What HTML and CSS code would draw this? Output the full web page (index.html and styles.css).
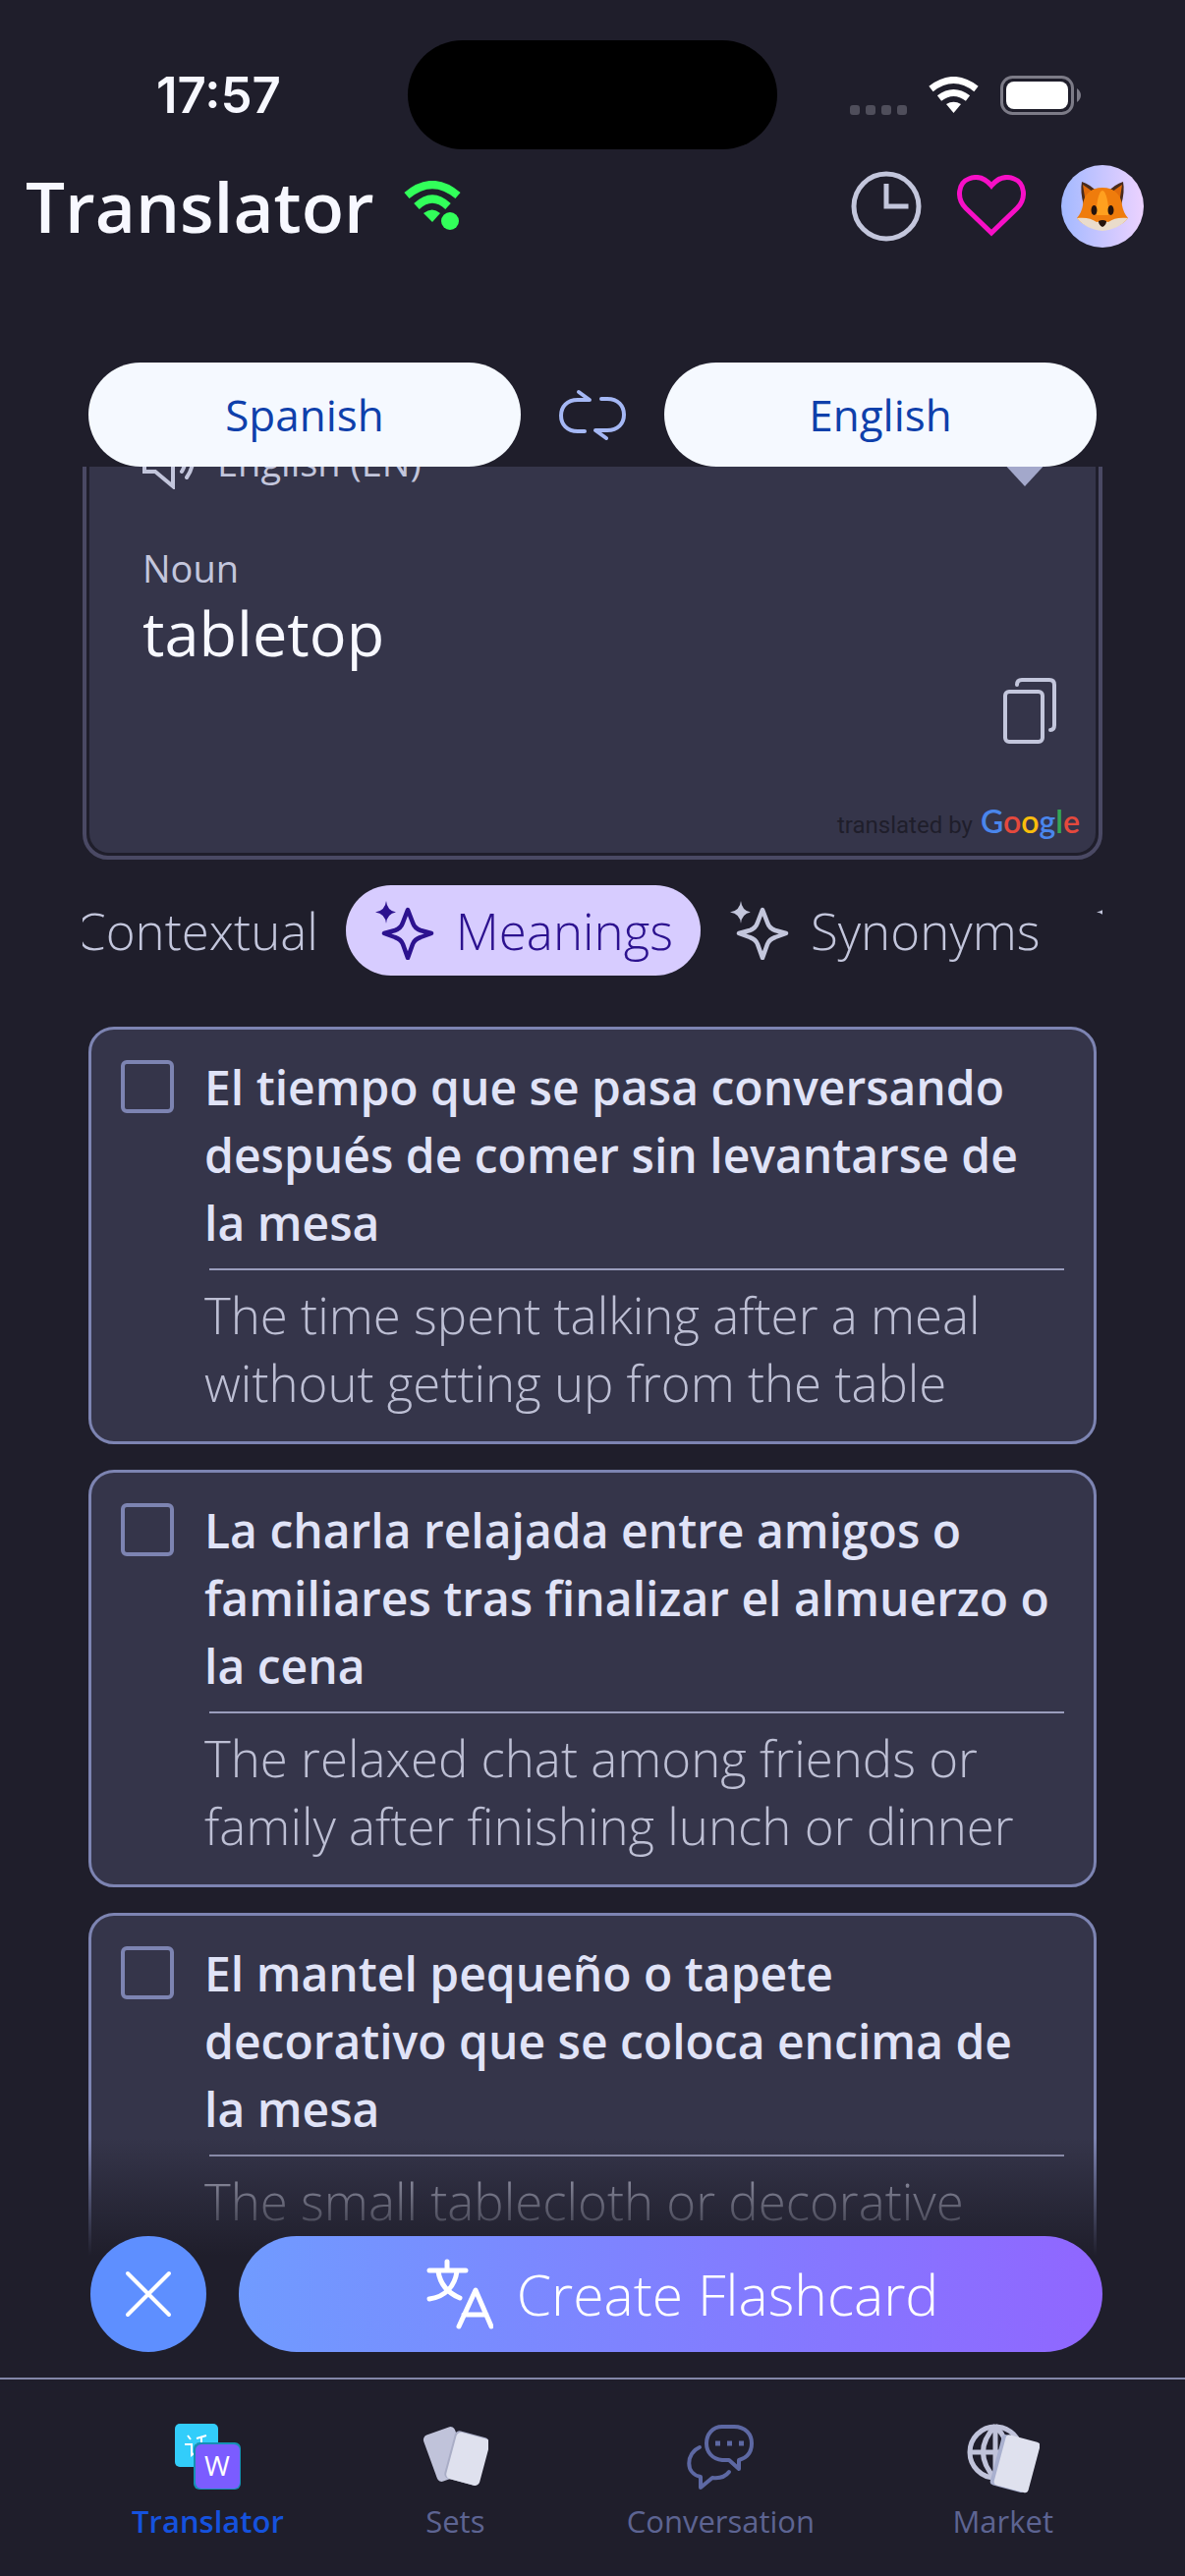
FILE: index.html
```html
<!DOCTYPE html>
<html lang="en">
<head>
  <meta charset="UTF-8" />
  <meta name="viewport" content="width=device-width, initial-scale=1.0"/>
  <title>Translator</title>
  <link rel="stylesheet" href="styles.css">
</head>
<body>

  <!-- Shared icons -->
  <svg class="sprite" aria-hidden="true">
    <symbol id="sparkle" viewBox="0 0 60 60">
      <path d="M11 0Q12 10 21 11.500Q12 13 11 23Q10 13 0 11.500Q10 10 11 0Z" fill="currentColor"/>
      <path d="M33 9L38 22Q40 28 46 30L57 33L46 37Q40 39 38 44L33 58L28 44Q26 39 20 37L9 33L20 30Q26 28 28 22Z" fill="none" stroke="currentColor" stroke-width="4.500" stroke-linejoin="round"/>
    </symbol>
  </svg>

  <div class="app">
    <div class="status">
      <span class="time">17:57</span>
      <div class="island"></div>
      <div class="signals">
        <div class="cell"><i></i><i></i><i></i><i></i></div>
        <svg width="51" height="38" viewBox="0 0 51 38" fill="none" stroke="#fff" stroke-width="7">
          <path d="M2.500 12.500Q25.500 -5.500 48.500 12.500"/>
          <path d="M11 22Q25.500 11 40 22"/>
          <path d="M18 28Q25.500 23.500 33 28L25.500 37Z" fill="#fff" stroke="none"/>
        </svg>
        <svg width="83" height="40" viewBox="0 0 83 40">
          <rect x="1.500" y="1.500" width="72" height="37" rx="11" fill="none" stroke="#7c7b87" stroke-width="3"/>
          <rect x="6" y="6" width="63" height="28" rx="8" fill="#fff"/>
          <path d="M78 13Q82 16 82 20Q82 24 78 27Z" fill="#7c7b87"/>
        </svg>
      </div>
    </div>

    <header class="topbar">
      <h1>Translator</h1>
      <svg class="online" width="58" height="52" viewBox="0 0 58 52" fill="none" stroke="#32ff5a" stroke-width="8">
        <path d="M3 15Q29 -7 55 15"/>
        <path d="M13 26Q29 11 45 26"/>
        <path d="M20 33Q29 26 37 33L29 42Z" fill="#32ff5a" stroke="none"/>
        <circle cx="47" cy="41" r="9" fill="#32ff5a" stroke="none"/>
      </svg>
      <div class="tools">
        <button class="icon-btn" aria-label="History">
          <svg width="72" height="72" viewBox="0 0 72 72" fill="none" stroke="#c3c6dc" stroke-width="5">
            <circle cx="36" cy="36" r="33"/>
            <path d="M36 13V36H58.500"/>
          </svg>
        </button>
        <button class="icon-btn" aria-label="Favorites">
          <svg width="70" height="64" viewBox="0 0 70 64" fill="none" stroke="#f70fc6" stroke-width="5">
            <path d="M35 59L9 34C-1 24 1 8 12 4C22 0 30 5 35 11C40 5 48 0 58 4C69 8 71 24 61 34Z"/>
          </svg>
        </button>
        <button class="avatar" aria-label="Profile">
          <svg width="52" height="50" viewBox="0 0 52 50">
            <path d="M5 0Q14 3 20 10L7 24Q3 10 5 0ZM47 0Q38 3 32 10L45 24Q49 10 47 0Z" fill="#4a2b1c"/>
            <path d="M6 3Q13 7 18 13L9 22ZM46 3Q39 7 34 13L43 22Z" fill="#e06a0a"/>
            <path d="M26 6C38 6 45 13 46 24Q47 31 52 37C47 44 36 48 26 49C16 48 5 44 0 37Q5 31 6 24C7 13 14 6 26 6Z" fill="#ef7c0c"/>
            <path d="M26 9C30 9 33 26 32 34H20C19 26 22 9 26 9Z" fill="#ffa01f"/>
            <path d="M0 37C8 36 15 37 20 41L26 40L32 41C37 37 44 36 52 37C46 45 36 49 26 50C16 49 6 45 0 37Z" fill="#eadccb"/>
            <ellipse cx="17.500" cy="29" rx="3" ry="5" fill="#24130d"/>
            <ellipse cx="34.500" cy="29" rx="3" ry="5" fill="#24130d"/>
            <path d="M22 40Q26 38 30 40Q30 44 26 46Q22 44 22 40Z" fill="#24130d"/>
          </svg>
        </button>
      </div>
    </header>

    <div class="languages">
      <button class="lang">Spanish</button>
      <button class="icon-btn" aria-label="Swap languages">
        <svg width="70" height="52" viewBox="0 0 70 52" fill="none" stroke="#a5b8f5" stroke-width="4" stroke-linecap="round" stroke-linejoin="round">
          <path d="M27 43H20C9 43 3 36 3 27C3 18 9 11 20 11H32L21 3"/>
          <path d="M44 10H50C61 10 67 17 67 26C67 35 61 42 50 42H38L49 50"/>
        </svg>
      </button>
      <button class="lang">English</button>
    </div>

    <main>
      <div class="scroll">
        <section class="result">
          <div class="result-body">
            <div class="result-head">
              <svg width="56" height="56" viewBox="0 0 56 56" fill="none" stroke="#c3c6dc" stroke-width="4">
                <path d="M2 17V38H13L31 53V3L13 17Z"/>
                <path d="M41 20Q46 28 40 38M47 14Q56 28 45 44" stroke-linecap="round"/>
              </svg>
              <span>English (EN)</span>
              <svg class="caret" width="48" height="26" viewBox="0 0 48 26"><path d="M0 0H48L24 26Z" fill="#a3a8cb"/></svg>
            </div>
            <p class="kind">Noun</p>
            <p class="word">tabletop</p>
            <button class="icon-btn copy" aria-label="Copy">
              <svg width="54" height="68" viewBox="0 0 54 68" fill="none" stroke="#c3c6dc" stroke-width="4" stroke-linecap="round">
                <rect x="2" y="14" width="38" height="51" rx="4"/>
                <path d="M14 7Q14 2 19 2H47Q52 2 52 7V48Q52 53 48 53"/>
              </svg>
            </button>
            <div class="credit">translated by
              <span class="google"><span class="blue">G</span><span class="red">o</span><span class="yellow">o</span><span class="blue">g</span><span class="green">l</span><span class="red">e</span></span>
            </div>
          </div>
        </section>

        <div class="chips">
          <button class="chip first"><svg><use href="#sparkle"/></svg>Contextual</button>
          <button class="chip active"><svg><use href="#sparkle"/></svg>Meanings</button>
          <button class="chip"><svg><use href="#sparkle"/></svg>Synonyms</button>
          <button class="chip" aria-label="More"><svg><use href="#sparkle"/></svg></button>
        </div>

        <div class="card">
          <input type="checkbox" id="m1">
          <label for="m1">
            <strong>El tiempo que se pasa conversando después de comer sin levantarse de la mesa</strong>
            <span>The time spent talking after a meal without getting up from the table</span>
          </label>
        </div>
        <div class="card">
          <input type="checkbox" id="m2">
          <label for="m2">
            <strong>La charla relajada entre amigos o familiares tras finalizar el almuerzo o la cena</strong>
            <span>The relaxed chat among friends or family after finishing lunch or dinner</span>
          </label>
        </div>
        <div class="card">
          <input type="checkbox" id="m3">
          <label for="m3">
            <strong>El mantel pequeño o tapete decorativo que se coloca encima de la mesa</strong>
            <span>The small tablecloth or decorative</span>
          </label>
        </div>
      </div>

      <!-- Floating actions over the list -->
      <div class="actions">
        <button class="close" aria-label="Close">
          <svg width="48" height="48" viewBox="0 0 48 48" stroke="#fff" stroke-width="4" stroke-linecap="round"><path d="M3 3L45 45M45 3L3 45"/></svg>
        </button>
        <button class="create">
          <svg width="68" height="72" viewBox="0 0 68 72" fill="none" stroke="#fff" stroke-width="5" stroke-linecap="round" stroke-linejoin="round">
            <path d="M3 12H40M21 3V12M12 13C14 26 22 35 34 40M31 13C29 28 19 39 3 41"/>
            <path d="M33 69L50 32L66 69M38 57H61"/>
          </svg>
          Create Flashcard
        </button>
      </div>
    </main>

    <nav>
      <a href="#" class="current">
        <svg width="68" height="68" viewBox="0 0 68 68">
          <rect x="1" y="1" width="44" height="44" rx="5" fill="#32cdfa"/>
          <path d="M14 13L17 17M11 22H18V33L22 30M23 16L33 13M22 22H35M28 15V28" fill="none" stroke="#fff" stroke-width="2"/>
          <rect x="20" y="20" width="48" height="48" rx="6" fill="#1590b5"/>
          <rect x="22" y="22" width="45" height="45" rx="6" fill="#7b5cff"/>
          <text x="44" y="54" text-anchor="middle" fill="#fff">W</text>
        </svg>
        Translator
      </a>
      <a href="#">
        <svg width="68" height="68" viewBox="0 0 68 68">
          <rect x="8" y="7" width="34" height="50" rx="5" fill="#c0c3da" transform="rotate(-20 25 32)"/>
          <rect x="28" y="11" width="36" height="50" rx="5" fill="#a9adc6" transform="rotate(15 46 36)"/>
          <rect x="30" y="12" width="35" height="49" rx="5" fill="#dfe1ee" transform="rotate(15 46 36)"/>
        </svg>
        Sets
      </a>
      <a href="#">
        <svg width="68" height="68" viewBox="0 0 68 68" fill="none" stroke="#5d68a3" stroke-width="4" stroke-linecap="round" stroke-linejoin="round">
          <path d="M36 4H48C60 4 66 12 66 21C66 31 60 36 53 38V47L43 38H36C26 37 20 30 20 21C20 12 26 4 36 4Z"/>
          <path d="M13 25C-1 31 -2 52 14 55V66L26 56C34 57 40 54 43 50"/>
          <path d="M29 21H34M41 21H46M53 21H58" stroke-width="5" stroke-linecap="butt"/>
        </svg>
        Conversation
      </a>
      <a href="#">
        <svg width="74" height="74" viewBox="0 0 74 74" fill="none" stroke="#c0c3da" stroke-width="5">
          <circle cx="29" cy="30" r="26"/>
          <path d="M2 30H56M29 3V57M29 3Q4 30 29 57M29 3Q54 30 29 57"/>
          <rect x="29" y="15" width="36" height="53" rx="4" fill="#a9b0cf" stroke="none" transform="rotate(15 47 42)"/>
          <rect x="33" y="15" width="36" height="53" rx="4" fill="#dfe1ee" stroke="none" transform="rotate(15 50 42)"/>
        </svg>
        Market
      </a>
    </nav>
  </div>

</body>
</html>
```

FILE: styles.css
```css
* { box-sizing: border-box; }

body {
  margin: 0;
  background: #1f1e2b;
  color: #f7f8ff;
  font-family: "Open Sans", Lato, sans-serif;
}

h1, p { margin: 0; }

button {
  border: none;
  padding: 0;
  background: none;
  color: inherit;
  font-family: inherit;
  cursor: pointer;
}

svg { display: block; flex: none; }

.sprite { position: absolute; width: 0; height: 0; }

.app {
  height: 100vh;
  display: flex;
  flex-direction: column;
}

/* Status bar */
.status {
  display: grid;
  grid-template-columns: 1fr 376px 1fr;
  align-items: center;
  height: 111px;
  margin-top: 41px;
}

.time {
  font-family: Inter, sans-serif;
  font-size: 51px;
  font-weight: 600;
  padding-left: 30px;
  text-align: center;
}

.island {
  height: 111px;
  border-radius: 56px;
  background: #000;
}

.signals {
  display: flex;
  align-items: center;
  justify-content: flex-end;
  gap: 22px;
  padding-right: 105px;
}

.cell {
  display: flex;
  gap: 6px;
  align-self: flex-end;
}

.cell i {
  width: 10px;
  height: 10px;
  border-radius: 3px;
  background: #4f4e5b;
}

/* Header */
.topbar {
  display: flex;
  align-items: center;
  height: 116px;
  padding: 0 42px 0 26px;
}

h1 {
  font-size: 71px;
  font-weight: 600;
  line-height: 88px;
}

.online { margin-left: 30px; }

.tools {
  display: flex;
  align-items: center;
  gap: 36px;
  margin-left: auto;
}

.avatar {
  display: flex;
  align-items: center;
  justify-content: center;
  width: 84px;
  height: 84px;
  border-radius: 50%;
  background: linear-gradient(90deg, #a3b9ff, #ecd2ff);
}

/* Language switch */
.languages {
  display: grid;
  grid-template-columns: 1fr 146px 1fr;
  justify-items: center;
  align-items: center;
  margin-top: 101px;
  padding: 0 90px;
}

.lang {
  width: 100%;
  height: 106px;
  border-radius: 53px;
  background: #f5f9ff;
  color: #0f40ab;
  font-size: 44px;
}

/* Scrolling content */
main {
  position: relative;
  flex: 1;
  min-height: 0;
  overflow: hidden;
}

.scroll {
  margin-top: -60px;
  padding: 0 84px;
}

.result {
  border: 4px solid #4a4964;
  border-radius: 26px;
  padding: 3px;
}

.result-body {
  display: flex;
  flex-direction: column;
  border-radius: 20px;
  background: #35354a;
  padding: 20px 16px 6px 54px;
}

.result-head {
  display: flex;
  align-items: center;
  gap: 20px;
  height: 56px;
  margin-bottom: 54px;
  color: #c3c6dc;
  font-size: 38px;
}

.caret { margin: 24px 32px 0 auto; }

.kind {
  color: #c3c6dc;
  font-size: 38px;
  line-height: 52px;
}

.word {
  font-size: 63px;
  line-height: 80px;
}

.copy {
  align-self: flex-end;
  margin: 6px 24px 0 0;
}

.credit {
  display: flex;
  align-items: baseline;
  align-self: flex-end;
  gap: 8px;
  margin-top: 56px;
  color: #1f1e2b;
  font-family: Roboto, sans-serif;
  font-size: 24px;
  line-height: 44px;
}

.google {
  font-family: Lato, sans-serif;
  font-size: 32px;
  font-weight: 600;
}

.blue { color: #4a86ec; }
.red { color: #e5493d; }
.yellow { color: #fabd0c; }
.green { color: #35a756; }

/* Tabs */
.chips {
  display: flex;
  margin-top: 26px;
  overflow: hidden;
}

.chip {
  display: flex;
  flex: none;
  align-items: center;
  gap: 22px;
  height: 92px;
  padding: 0 28px 0 30px;
  border-radius: 46px;
  color: #c3c6dc;
  font-size: 51px;
  font-weight: 300;
}

.chip svg { width: 60px; height: 60px; }

.chip.first { margin-left: -120px; }

.chip.active {
  background: #d7ccff;
  color: #2c128f;
}

/* Meaning cards */
.card {
  display: flex;
  align-items: flex-start;
  gap: 31px;
  margin: 26px 6px 0;
  padding: 24px 30px 25px;
  border: 3px solid #7d84b2;
  border-radius: 26px;
  background: #35354a;
}

.chips + .card { margin-top: 52px; }

.card:last-child { padding-bottom: 96px; }

.card input {
  appearance: none;
  flex: none;
  width: 54px;
  height: 54px;
  margin: 7px 0 0;
  border: 4px solid #7d84b2;
  border-radius: 6px;
}

.card label {
  flex: 1;
  color: #bdbfd4;
  font-size: 51px;
  font-weight: 300;
  line-height: 69px;
}

.card strong {
  display: block;
  color: #e0e3f7;
  font-size: 48px;
  font-weight: 600;
}

.card span {
  display: block;
  margin-top: 12px;
  padding-top: 13px;
  background: linear-gradient(#9a9dbd, #9a9dbd) 5px 0 / 100% 2px no-repeat;
}

/* Bottom actions */
.actions {
  position: absolute;
  left: 0;
  right: 0;
  bottom: 0;
  display: flex;
  gap: 33px;
  padding: 100px 84px 26px 92px;
  background: linear-gradient(rgba(31, 30, 43, 0), #1f1e2b 120px);
}

.close,
.create {
  display: flex;
  align-items: center;
  justify-content: center;
  height: 118px;
  border-radius: 59px;
}

.close {
  width: 118px;
  background: #5e8fff;
}

.create {
  flex: 1;
  gap: 24px;
  padding-left: 24px;
  background: linear-gradient(90deg, #709bff, #8080ff 50%, #9066ff);
  color: #fff;
  font-size: 57px;
  font-weight: 300;
}

/* Tab bar */
nav {
  display: flex;
  justify-content: space-between;
  height: 202px;
  padding: 44px 134px 0;
  border-top: 2px solid #8287a8;
}

nav a {
  display: flex;
  flex-direction: column;
  align-items: center;
  justify-content: space-between;
  height: 118px;
  color: #5d6492;
  font-size: 31px;
  line-height: 36px;
  text-decoration: none;
}

nav .current {
  color: #1552de;
  font-weight: 600;
}

nav text {
  font-size: 28px;
  font-weight: 400;
}
```
